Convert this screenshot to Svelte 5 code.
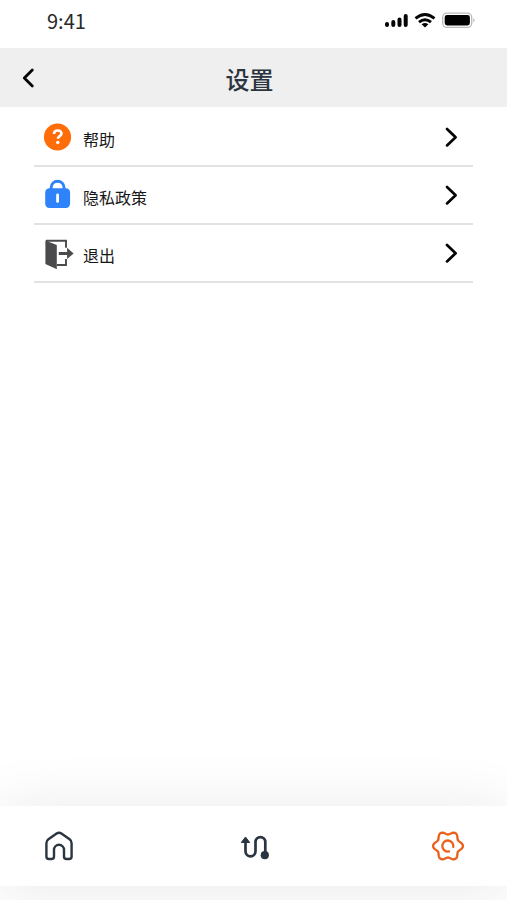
<script lang="ts">
	type Icon = 'help' | 'privacy' | 'logout';

	const items: { icon: Icon; label: string }[] = [
		{ icon: 'help', label: '帮助' },
		{ icon: 'privacy', label: '隐私政策' },
		{ icon: 'logout', label: '退出' }
	];

	// Six-lobed outline of the settings icon
	const gearPoints = Array.from({ length: 120 }, (_, i) => {
		const angle = (i / 120) * Math.PI * 2;
		const radius = 13.2 + 1.7 * Math.cos(angle * 6);
		return `${(17 + radius * Math.cos(angle)).toFixed(2)},${(17 + radius * Math.sin(angle)).toFixed(2)}`;
	}).join(' ');
</script>

<div class="screen">
	<div class="status-bar">
		<span class="time">9:41</span>
		<svg width="92" height="20" viewBox="0 0 92 20" aria-hidden="true">
			<g stroke="#050505" stroke-width="4" stroke-linecap="round">
				<path d="M4 14v1M10.3 12v3M16.5 9.5v5.5M22.7 6v9" />
			</g>
			<g fill="none" stroke="#050505" stroke-width="2.8">
				<path d="M32.5 8.4q9.5-7.8 19 0M36 12.2q6-5 12 0" />
			</g>
			<path d="M38.6 14.2q3.4-2.6 6.8 0L42 17.5z" fill="#050505" />
			<rect x="59.7" y="3.2" width="29" height="14.2" rx="4.2" fill="none" stroke="#bababa" stroke-width="1.3" />
			<rect x="61.7" y="5" width="25.2" height="10.4" rx="2.4" fill="#000" />
			<path d="M90.3 8.2q2.5 2 0 4.2z" fill="#b5b5b5" />
		</svg>
	</div>

	<header>
		<button class="back" aria-label="返回">
			<svg width="14" height="22" viewBox="0 0 14 22" fill="none" stroke="#050505" stroke-width="2.8" stroke-linecap="round" stroke-linejoin="round">
				<path d="M11.3 3L3.3 11l8 8" />
			</svg>
		</button>
		<h1>设置</h1>
	</header>

	<main>
		{#each items as item}
			<button class="row">
				<svg class="row__icon" width="32" height="32" viewBox="0 0 32 32" aria-hidden="true">
					{#if item.icon === 'help'}
						<circle cx="15.5" cy="16" r="13.6" fill="#ff6d08" />
						<path d="M12 13.1c0-4.8 7.5-4.6 7.5-.6 0 2.7-3.6 2.6-3.6 5.3" fill="none" stroke="#fff" stroke-width="2.6" />
						<circle cx="15.8" cy="21.5" r="1.7" fill="#fff" />
					{:else if item.icon === 'privacy'}
						<path d="M9.2 11V8.3a6.4 6 0 0 1 12.8 0V11" fill="none" stroke="#2e83fb" stroke-width="2.9" />
						<rect x="3.2" y="9.3" width="24.9" height="19.6" rx="4.2" fill="#2e83fb" />
						<path d="M15.6 16v6.4" stroke="#fff" stroke-width="2.8" stroke-linecap="round" />
					{:else}
						<path d="M3.4 3.5L14.8 8v24.2L3.4 27z" fill="#4b4b4d" />
						<path d="M4 3.8h20v7M24 22v6h-9" fill="none" stroke="#4b4b4d" stroke-width="1.9" />
						<path d="M16.8 14.9h8.3v-4.2l6.5 5.8-6.5 5.6V18h-8.3z" fill="#4b4b4d" />
					{/if}
				</svg>
				<span>{item.label}</span>
				<svg class="row__arrow" width="16" height="24" viewBox="0 0 16 24" fill="none" stroke="#050505" stroke-width="2.7" stroke-linecap="round" stroke-linejoin="round">
					<path d="M4 4l8.6 8.2L4 20.4" />
				</svg>
			</button>
		{/each}
	</main>

	<nav>
		<button aria-label="首页">
			<svg width="34" height="34" viewBox="0 0 34 34" fill="none" stroke="#2b3542" stroke-width="2.4" stroke-linejoin="round">
				<path d="M4.4 14.2q0-2.5 2-3.9l8.2-5.8q2.4-1.6 4.8 0l8.2 5.8q2 1.4 2 3.9v13.2q0 2.6-2.6 2.6h-2.4q-2.6 0-2.6-2.6v-6.6a5 5 0 0 0-10 0v6.6q0 2.6-2.6 2.6H7q-2.6 0-2.6-2.6z" />
			</svg>
		</button>
		<button aria-label="路线">
			<svg width="34" height="34" viewBox="0 0 34 34" fill="none">
				<path d="M8.5 12v10.3a5 5 0 0 0 10 0V13a4.9 4.9 0 0 1 9.8 0v12" stroke="#2b3542" stroke-width="2.7" />
				<path d="M8.5 8l4.2 5.5H4.3z" fill="#2b3542" stroke="#2b3542" stroke-linejoin="round" />
				<circle cx="27.8" cy="26.2" r="4.1" fill="#2b3542" />
			</svg>
		</button>
		<button aria-label="设置">
			<svg width="34" height="34" viewBox="0 0 34 34" fill="none" stroke="#eb611b" stroke-width="2.3" stroke-linejoin="round" stroke-linecap="round">
				<polygon points={gearPoints} />
				<path d="M22.3 17.8A5.5 5.5 0 1 0 18 22.4" />
			</svg>
		</button>
	</nav>
</div>

<style>
	:global(body) {
		background: #fff;
	}

	.screen {
		display: flex;
		height: 900px;
		overflow: hidden;
		flex-direction: column;
		background: #fff;
		font-family: "Noto Sans CJK SC", sans-serif;
	}

	button {
		display: flex;
		padding: 0;
		align-items: center;
		color: inherit;
		background: none;
		border: 0;
		font: inherit;
	}

	svg {
		display: block;
		flex: none;
	}

	.status-bar {
		display: flex;
		height: 48px;
		padding: 10px 32px 0 47px;
		align-items: flex-start;
		justify-content: space-between;
		box-sizing: border-box;
	}

	.time {
		color: #292929;
		font-family: "Noto Sans CJK SC", sans-serif;
		font-size: 20px;
		line-height: 22px;
	}

	header {
		display: grid;
		height: 59px;
		padding: 0 21px;
		grid-template-columns: 1fr auto 1fr;
		align-items: center;
		background: #efefef;
	}

	h1 {
		margin: 3px 0 0;
		transform: translateX(-4px);
		color: #2c3440;
		font-size: 24px;
		font-weight: 500;
		line-height: 36px;
	}

	main {
		display: flex;
		padding: 2px 34px 0;
		flex: 1;
		flex-direction: column;
	}

	.row {
		height: 58px;
		padding: 0 14px 0 8px;
		box-sizing: border-box;
		border-bottom: 2px solid #e2e2e2;
		color: #171717;
		font-size: 16px;
		line-height: 24px;
	}

	.row__icon {
		margin-right: 9px;
	}

	.row span {
		margin-top: 3px;
	}

	.row__arrow {
		margin-left: auto;
	}

	nav {
		display: flex;
		height: 80px;
		margin-bottom: 14px;
		padding: 0 42px;
		flex: none;
		align-items: center;
		justify-content: space-between;
		box-sizing: border-box;
		background: #fff;
		box-shadow: 0 4px 60px rgb(30 30 40 / 10%);
	}
</style>
